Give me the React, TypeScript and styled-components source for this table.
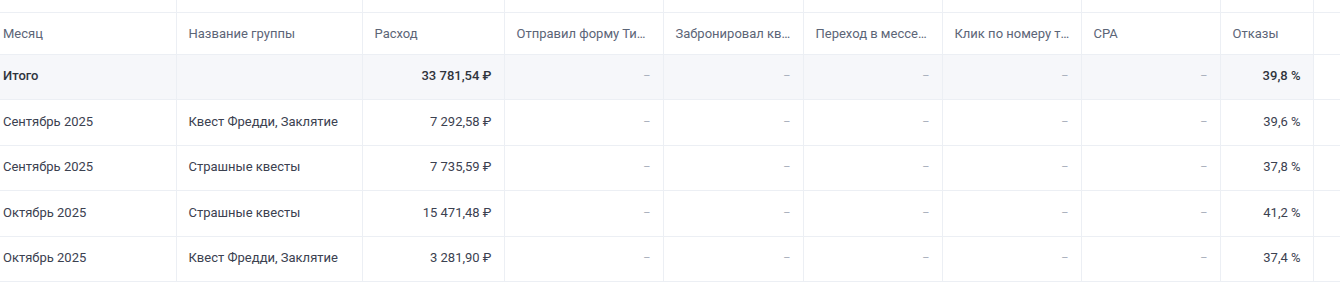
import React from 'react';
import styled, { createGlobalStyle, css } from 'styled-components';

interface Row {
  month: string;
  group: string;
  cost: string;
  bounce: string;
  total?: boolean;
}

interface Column {
  title: string;
  label: string;
  width: number;
}

const columns: Column[] = [
  { title: 'Месяц', label: 'Месяц', width: 176 },
  { title: 'Название группы', label: 'Название группы', width: 186 },
  { title: 'Расход', label: 'Расход', width: 142 },
  { title: 'Отправил форму Тильда', label: 'Отправил форму Ти…', width: 159 },
  { title: 'Забронировал квест', label: 'Забронировал кв…', width: 140 },
  { title: 'Переход в мессенджер', label: 'Переход в мессе…', width: 139 },
  { title: 'Клик по номеру телефона', label: 'Клик по номеру т…', width: 139 },
  { title: 'CPA', label: 'CPA', width: 139 },
  { title: 'Отказы', label: 'Отказы', width: 93 },
  { title: '', label: '', width: 27 },
];

const nb = '\u00A0';

const rows: Row[] = [
  { month: 'Итого', group: '', cost: `33${nb}781,54${nb}₽`, bounce: `39,8${nb}%`, total: true },
  { month: 'Сентябрь 2025', group: 'Квест Фредди, Заклятие', cost: `7${nb}292,58${nb}₽`, bounce: `39,6${nb}%` },
  { month: 'Сентябрь 2025', group: 'Страшные квесты', cost: `7${nb}735,59${nb}₽`, bounce: `37,8${nb}%` },
  { month: 'Октябрь 2025', group: 'Страшные квесты', cost: `15${nb}471,48${nb}₽`, bounce: `41,2${nb}%` },
  { month: 'Октябрь 2025', group: 'Квест Фредди, Заклятие', cost: `3${nb}281,90${nb}₽`, bounce: `37,4${nb}%` },
];

const App: React.FC = () => {
  return (
    <>
      <GlobalStyle />
      <Wrapper>
        <Table>
          <colgroup>
            {columns.map((col, index) => (
              <col key={`col_${index}`} style={{ width: col.width }} />
            ))}
          </colgroup>
          <thead>
            <StubRow>
              {columns.map((_, index) => (
                <StubCell key={`stub_${index}`} />
              ))}
            </StubRow>
            <HeadRow>
              {columns.map((col, index) => (
                <HeadCell key={`head_${index}`} first={index === 0} title={col.title}>
                  {col.label}
                </HeadCell>
              ))}
            </HeadRow>
          </thead>
          <tbody>
            {rows.map((row, index) => (
              <BodyRow key={`row_${index}`} total={row.total}>
                <Cell first total={row.total}>
                  {row.month}
                </Cell>
                <Cell>{row.group}</Cell>
                <NumCell total={row.total}>{row.cost}</NumCell>
                <DashCell>–</DashCell>
                <DashCell>–</DashCell>
                <DashCell>–</DashCell>
                <DashCell>–</DashCell>
                <DashCell>–</DashCell>
                <NumCell total={row.total}>{row.bounce}</NumCell>
                <EmptyCell />
              </BodyRow>
            ))}
          </tbody>
        </Table>
      </Wrapper>
    </>
  );
};

const GlobalStyle = createGlobalStyle`
  body {
    margin: 0;
    background: #ffffff;
    font-family: Roboto, 'Noto Sans', 'Liberation Sans', sans-serif;
    -webkit-font-smoothing: antialiased;
  }
`;

const Wrapper = styled.div`
  width: 1340px;
  height: 300px;
  overflow: hidden;
  background: #ffffff;
`;

const Table = styled.table`
  width: 1340px;
  table-layout: fixed;
  border-collapse: collapse;
  font-size: 13px;
  color: #3b4150;
`;

const borderColor = '#eceff4';

const StubRow = styled.tr`
  height: 12px;
`;

const StubCell = styled.th`
  padding: 0;
  border-right: 1px solid ${borderColor};
  border-bottom: 1px solid ${borderColor};
`;

const HeadRow = styled.tr`
  height: 42px;
`;

const HeadCell = styled.th<{ first?: boolean }>`
  padding: 0 8px 0 12px;
  padding-left: ${({ first }) => (first ? '3px' : '12px')};
  text-align: left;
  font-weight: 400;
  color: #5c6577;
  white-space: nowrap;
  overflow: hidden;
  border-right: 1px solid ${borderColor};
  border-bottom: 1px solid ${borderColor};
`;

const BodyRow = styled.tr<{ total?: boolean }>`
  height: 45.5px;
  background: ${({ total }) => (total ? '#f6f7fa' : '#ffffff')};
`;

const Cell = styled.td<{ first?: boolean; total?: boolean }>`
  padding: 0 12px 2px;
  padding-left: ${({ first }) => (first ? '3px' : '12px')};
  white-space: nowrap;
  overflow: hidden;
  text-overflow: ellipsis;
  border-right: 1px solid ${borderColor};
  border-bottom: 1px solid ${borderColor};

  ${({ total }) =>
    total &&
    css`
      font-weight: 500;
      color: #30343d;
    `}
`;

const NumCell = styled(Cell)`
  text-align: right;
`;

const DashCell = styled(Cell)`
  text-align: right;
  color: #a4abb8;
  font-size: 11px;
`;

const EmptyCell = styled(Cell)`
  background: #ffffff;
`;

export default App;
